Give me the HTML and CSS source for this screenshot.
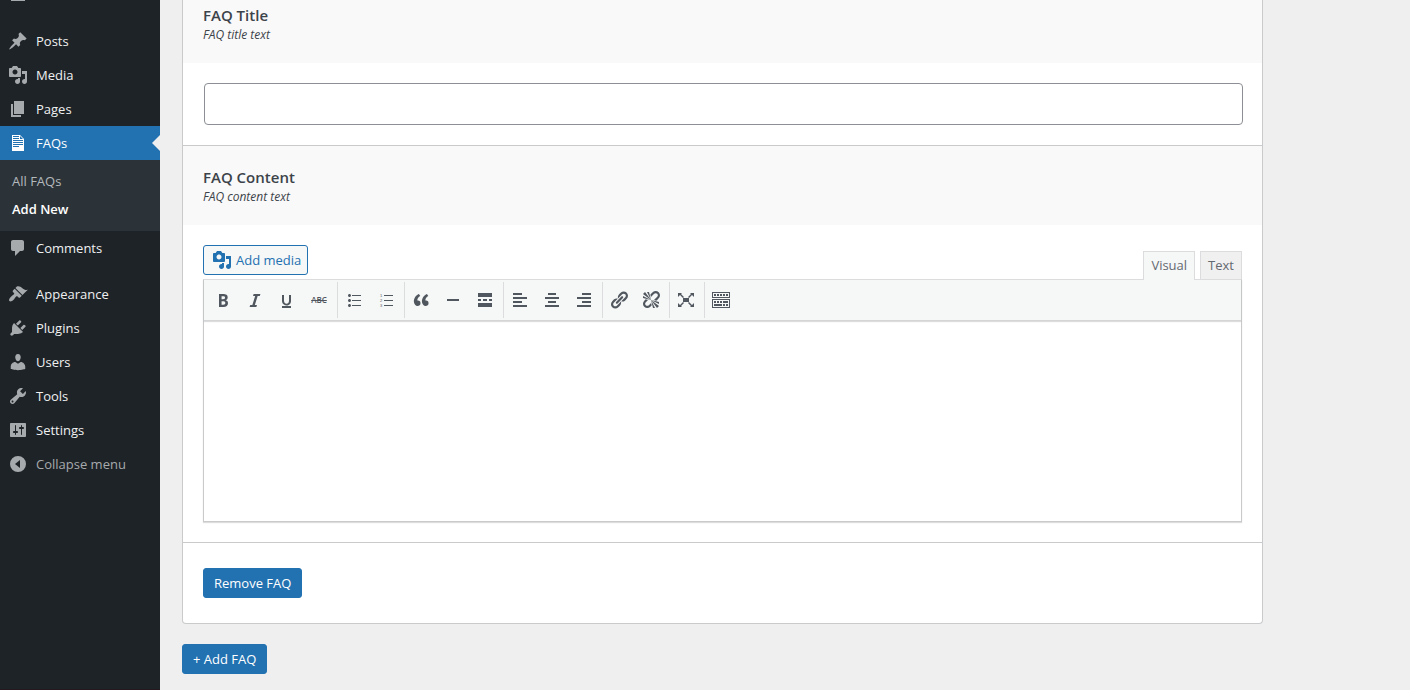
FILE: index.html
```html
<!DOCTYPE html>
<html lang="en">
<head>
<meta charset="utf-8">
<title>Add New FAQ</title>
<link rel="stylesheet" href="styles.css">
</head>
<body>
<div class="layout">
  <nav class="sidebar" aria-label="Main menu">
    <div class="scrolled-item"></div>
    <ul class="menu">
      <li><a class="menu-link" href="#"><svg class="icon" viewBox="0 0 20 20"><path d="M10.44 3.02l1.82-1.82 6.36 6.35-1.83 1.82c-1.05-.68-2.48-.57-3.41.36l-.75.75c-.92.93-1.04 2.35-.35 3.41l-1.83 1.82-2.41-2.41-2.8 2.79c-.42.42-3.38 2.71-3.8 2.29s1.86-3.39 2.28-3.81l2.79-2.79L4.1 9.36l1.83-1.82c1.05.69 2.48.57 3.4-.36l.75-.75c.93-.92 1.05-2.35.36-3.41z"/></svg>Posts</a></li>
      <li><a class="menu-link" href="#"><svg class="icon" viewBox="0 0 20 20"><path d="M13 11V4c0-.55-.45-1-1-1h-1.67L9 1H5L3.67 3H2c-.55 0-1 .45-1 1v7c0 .55.45 1 1 1h10c.55 0 1-.45 1-1zM7 4.500c1.380 0 2.500 1.120 2.500 2.500S8.380 9.500 7 9.500 4.500 8.380 4.500 7 5.620 4.500 7 4.500zM14 6h5v10.500c0 1.380-1.120 2.500-2.500 2.500S14 17.880 14 16.500s1.120-2.500 2.500-2.500c.17 0 .34.02.5.05V9h-3V6zm-4 8.050V13h2v3.500c0 1.380-1.120 2.500-2.500 2.500S7 17.880 7 16.500 8.120 14 9.500 14c.17 0 .34.02.5.05z"/></svg>Media</a></li>
      <li><a class="menu-link" href="#"><svg class="icon" viewBox="0 0 20 20"><path d="M6 15V2h10v13H6zm-1 1h8v2H3V5h2v11z"/></svg>Pages</a></li>
      <li>
        <a class="menu-link current" href="#"><svg class="icon" viewBox="0 0 20 20"><path d="M12 2l4 4v12H4V2h8zM5 3v1h6V3H5zm7 3h3l-3-3v3zM5 5v1h6V5H5zm10 3V7H5v1h10zm0 2V9H5v1h10zm0 2v-1H5v1h10zm-4 2v-1H5v1h6z"/></svg>FAQs</a>
        <ul class="submenu">
          <li><a class="submenu-link" href="#">All FAQs</a></li>
          <li><a class="submenu-link active" href="#">Add New</a></li>
        </ul>
      </li>
      <li><a class="menu-link" href="#"><svg class="icon" viewBox="0 0 20 20"><path d="M5 2h9c1.1 0 2 .9 2 2v7c0 1.100-.9 2-2 2h-2l-5 5v-5H5c-1.100 0-2-.9-2-2V4c0-1.100.9-2 2-2z"/></svg>Comments</a></li>
      <li class="separated"><a class="menu-link" href="#"><svg class="icon" viewBox="0 0 20 20"><path d="M14.48 11.06L7.41 3.99l1.500-1.500c.5-.56 2.300-.47 3.510.32 1.210.8 1.430 1.280 2.910 2.100 1.180.64 2.450 1.260 4.450.85zm-.71.71L6.700 4.700 4.930 6.470c-.39.39-.39 1.020 0 1.410l1.060 1.060c.39.39.39 1.030 0 1.420-.6.6-1.430 1.110-2.210 1.690-.35.26-.7.53-1.010.84C1.430 14.230.4 16.080 1.400 17.070c.99 1 2.840-.03 4.180-1.360.31-.31.58-.66.85-1.020.57-.78 1.080-1.610 1.690-2.210.39-.39 1.020-.39 1.410 0l1.060 1.060c.39.39 1.020.39 1.410 0z"/></svg>Appearance</a></li>
      <li><a class="menu-link" href="#"><svg class="icon" viewBox="0 0 20 20"><path d="M13.11 4.36L9.87 7.600 8 5.730l3.240-3.240c.35-.34 1.050-.2 1.560.32.52.51.66 1.210.31 1.550zm-8 1.770l.91-1.120 9.010 9.010-1.190.84c-.71.71-2.630 1.160-3.820 1.160H6.140L4.900 17.260c-.59.59-1.540.59-2.120 0-.59-.58-.59-1.530 0-2.120l1.240-1.240v-3.880c0-1.130.4-3.190 1.090-3.890zm7.260 3.970l3.240-3.240c.34-.35 1.040-.21 1.550.31.52.51.66 1.210.31 1.550l-3.240 3.250z"/></svg>Plugins</a></li>
      <li><a class="menu-link" href="#"><svg class="icon" viewBox="0 0 20 20"><path d="M10 9.250c-2.270 0-2.730-3.440-2.730-3.440C7 4.020 7.820 2 9.970 2c2.160 0 2.980 2.020 2.710 3.810 0 0-.41 3.440-2.680 3.440zm0 2.570L12.720 10c2.390 0 4.520 2.330 4.520 4.530v2.490s-3.650 1.130-7.240 1.130c-3.650 0-7.240-1.130-7.240-1.130v-2.490c0-2.250 1.940-4.480 4.470-4.480z"/></svg>Users</a></li>
      <li><a class="menu-link" href="#"><svg class="icon" viewBox="0 0 20 20"><path d="M16.68 9.77c-1.340 1.340-3.300 1.670-4.950.99l-5.410 6.520c-.99.99-2.590.99-3.580 0s-.99-2.590 0-3.570l6.520-5.420c-.68-1.650-.35-3.610.99-4.950 1.280-1.280 3.120-1.620 4.720-1.060l-2.890 2.890 2.820 2.820 2.860-2.870c.53 1.580.18 3.390-1.080 4.650zM3.810 16.210c.4.39 1.040.39 1.430 0 .4-.4.4-1.040 0-1.430-.39-.4-1.030-.4-1.430 0-.39.39-.39 1.030 0 1.430z"/></svg>Tools</a></li>
      <li><a class="menu-link" href="#"><svg class="icon" viewBox="0 0 20 20"><path d="M18 16V4c0-.55-.45-1-1-1H3c-.55 0-1 .45-1 1v12c0 .55.45 1 1 1h14c.55 0 1-.45 1-1zM8 11h1c.55 0 1 .45 1 1s-.45 1-1 1H8v1.500c0 .28-.22.5-.5.5s-.5-.22-.5-.5V13H6c-.55 0-1-.45-1-1s.45-1 1-1h1V5.500c0-.28.22-.5.5-.5s.5.22.5.5V11zm5-2h-1c-.55 0-1-.45-1-1s.45-1 1-1h1V5.500c0-.28.22-.5.5-.5s.5.22.5.5V7h1c.55 0 1 .45 1 1s-.45 1-1 1h-1v5.500c0 .28-.22.5-.5.5s-.5-.22-.5-.5V9z"/></svg>Settings</a></li>
      <li><button class="menu-link collapse" type="button"><svg class="icon" viewBox="0 0 20 20"><path fill-rule="evenodd" d="M10 2a8 8 0 1 0 0 16 8 8 0 0 0 0-16zM12 6v8l-5-4z"/></svg>Collapse menu</button></li>
    </ul>
  </nav>

  <main class="content">
    <section class="panel">
      <header class="field-head first">
        <label class="field-title" for="faq-title">FAQ Title</label>
        <p class="field-note">FAQ title text</p>
      </header>
      <div class="title-body">
        <input class="title-input" id="faq-title" type="text">
      </div>
      <header class="field-head ruled">
        <label class="field-title" for="faq-content">FAQ Content</label>
        <p class="field-note">FAQ content text</p>
      </header>
      <div class="editor-field">
        <div class="editor-tools">
          <button class="media-button" type="button"><svg class="icon media-icon" viewBox="0 0 20 20"><path d="M13 11V4c0-.55-.45-1-1-1h-1.670L9 1H5L3.670 3H2c-.55 0-1 .45-1 1v7c0 .55.45 1 1 1h10c.55 0 1-.45 1-1zM7 4.500c1.380 0 2.500 1.120 2.500 2.500S8.380 9.500 7 9.500 4.500 8.380 4.500 7 5.620 4.500 7 4.500zM14 6h5v10.500c0 1.380-1.120 2.500-2.500 2.500S14 17.880 14 16.500s1.120-2.500 2.500-2.500c.17 0 .34.02.5.05V9h-3V6zm-4 8.050V13h2v3.500c0 1.380-1.120 2.500-2.500 2.500S7 17.880 7 16.500 8.120 14 9.500 14c.17 0 .34.02.5.05z"/></svg>Add media</button>
          <div class="tabs">
            <button class="tab selected" type="button">Visual</button>
            <button class="tab" type="button">Text</button>
          </div>
        </div>
        <div class="editor">
          <div class="toolbar">
            <div class="tool-group">
              <button class="tool" type="button" aria-label="Bold"><svg class="icon" viewBox="0 0 20 20"><path d="M6 4v13h4.540c1.370 0 2.460-.33 3.260-1 .8-.66 1.200-1.580 1.200-2.770 0-.84-.17-1.510-.51-2.010s-.9-.85-1.670-1.030v-.09c.57-.1 1.020-.4 1.360-.9s.51-1.130.51-1.910c0-1.140-.39-1.980-1.170-2.500C12.750 4.260 11.500 4 9.780 4H6zm2.570 5.150V6.260h1.360c.73 0 1.270.11 1.610.32.34.22.51.58.51 1.070 0 .54-.16.92-.47 1.150s-.82.35-1.510.35h-1.500zm0 2.190h1.600c1.440 0 2.160.53 2.160 1.610 0 .6-.17 1.050-.51 1.340s-.86.43-1.570.43H8.570v-3.380z"/></svg></button>
              <button class="tool" type="button" aria-label="Italic"><svg class="icon" viewBox="0 0 20 20"><path d="M14.780 6h-2.130l-2.800 9h2.120l-.62 2H4.600l.62-2h2.140l2.800-9H8.030l.62-2h6.750z"/></svg></button>
              <button class="tool" type="button" aria-label="Underline"><svg class="icon" viewBox="0 0 20 20"><path d="M14 5h-2v5.710c0 1.990-1.120 2.980-2.450 2.980-1.320 0-2.550-1-2.550-2.960V5H5v5.870c0 1.910 1 4.540 4.480 4.540 3.490 0 4.520-2.580 4.520-4.500V5zm0 13v-2H5v2h9z"/></svg></button>
              <button class="tool strike" type="button" aria-label="Strikethrough">ABC</button>
            </div>
            <div class="tool-group">
              <button class="tool" type="button" aria-label="Bulleted list"><svg class="icon" viewBox="0 0 20 20"><path d="M5.500 7C4.670 7 4 6.330 4 5.500 4 4.680 4.670 4 5.500 4 6.320 4 7 4.680 7 5.500 7 6.330 6.320 7 5.500 7zM8 5h9v1H8V5zm-2.500 7c-.83 0-1.500-.67-1.500-1.500C4 9.680 4.670 9 5.500 9c.82 0 1.500.68 1.500 1.500 0 .83-.68 1.500-1.500 1.500zM8 10h9v1H8v-1zm-2.500 7c-.83 0-1.500-.67-1.500-1.500 0-.82.67-1.500 1.500-1.500.82 0 1.500.68 1.500 1.500 0 .83-.68 1.500-1.500 1.500zM8 15h9v1H8v-1z"/></svg></button>
              <button class="tool" type="button" aria-label="Numbered list"><svg class="icon list-digits" viewBox="0 0 20 20"><path d="M8 5h9v1H8zM8 10h9v1H8zM8 15h9v1H8z"/><text x="4" y="7">1</text><text x="4" y="12">2</text><text x="4" y="17">3</text></svg></button>
            </div>
            <div class="tool-group">
              <button class="tool" type="button" aria-label="Blockquote"><svg class="icon" viewBox="0 0 20 20"><path d="M9.490 13.220c0-.74-.2-1.380-.61-1.900-.62-.78-1.830-.88-2.530-.72-.29-1.650 1.110-3.750 2.920-4.650L7.880 4c-2.730 1.300-5.420 4.280-4.960 8.050C3.210 14.430 4.590 16 6.540 16c.85 0 1.560-.25 2.120-.75s.83-1.180.83-2.030zm8.050 0c0-.74-.2-1.380-.61-1.900-.63-.78-1.830-.88-2.530-.72-.29-1.650 1.110-3.750 2.920-4.650L15.930 4c-2.730 1.300-5.410 4.280-4.950 8.050.29 2.380 1.660 3.950 3.610 3.950.85 0 1.560-.25 2.120-.75s.83-1.180.83-2.030z"/></svg></button>
              <button class="tool" type="button" aria-label="Horizontal line"><svg class="icon" viewBox="0 0 20 20"><path d="M4 9h12v2H4z"/></svg></button>
              <button class="tool" type="button" aria-label="Read more"><svg class="icon" viewBox="0 0 20 20"><path d="M17 7V3H3v4h14zM6 11V9H3v2h3zm6 0V9H8v2h4zm5 0V9h-3v2h3zm0 6v-4H3v4h14z"/></svg></button>
            </div>
            <div class="tool-group">
              <button class="tool" type="button" aria-label="Align left"><svg class="icon" viewBox="0 0 20 20"><path d="M12 5V3H3v2h9zm5 4V7H3v2h14zm-5 4v-2H3v2h9zm5 4v-2H3v2h14z"/></svg></button>
              <button class="tool" type="button" aria-label="Align center"><svg class="icon" viewBox="0 0 20 20"><path d="M14 5V3H6v2h8zm3 4V7H3v2h14zm-3 4v-2H6v2h8zm3 4v-2H3v2h14z"/></svg></button>
              <button class="tool" type="button" aria-label="Align right"><svg class="icon" viewBox="0 0 20 20"><path d="M17 5V3H8v2h9zm0 4V7H3v2h14zm0 4v-2H8v2h9zm0 4v-2H3v2h14z"/></svg></button>
            </div>
            <div class="tool-group">
              <button class="tool" type="button" aria-label="Insert link"><svg class="icon" viewBox="0 0 20 20"><path d="M17.740 2.760c1.680 1.690 1.680 4.410 0 6.100l-1.530 1.520c-1.120 1.120-2.700 1.470-4.140 1.090l2.620-2.610.76-.77.76-.76c.84-.84.84-2.200 0-3.040-.84-.85-2.200-.85-3.040 0l-.77.76-3.380 3.380c-.37-1.440-.02-3.020 1.100-4.140l1.520-1.530c1.690-1.680 4.420-1.680 6.100 0zM8.590 13.430l5.340-5.340c.42-.42.42-1.100 0-1.520-.44-.43-1.130-.39-1.530 0l-5.330 5.340c-.42.42-.42 1.100 0 1.520.44.43 1.130.39 1.520 0zm-.76 2.290l4.140-4.150c.38 1.440.03 3.020-1.090 4.140l-1.520 1.530c-1.690 1.680-4.410 1.680-6.100 0-1.680-1.680-1.680-4.420 0-6.100l1.530-1.520c1.120-1.120 2.700-1.470 4.140-1.100l-4.140 4.150c-.85.84-.85 2.200 0 3.050.84.84 2.200.84 3.040 0z"/></svg></button>
              <button class="tool" type="button" aria-label="Remove link"><svg class="icon" viewBox="0 0 20 20"><path d="M17.740 2.260c1.680 1.690 1.680 4.410 0 6.100l-1.530 1.520c-.32.33-.69.58-1.080.77L13 10l1.690-1.640.76-.77.76-.76c.84-.84.84-2.200 0-3.040-.84-.85-2.200-.85-3.040 0l-.77.76-.76.76L10 7l-.65-2.140c.19-.38.44-.75.77-1.070l1.520-1.530c1.690-1.680 4.420-1.680 6.100 0zM2 4l8 6-6-8zm4-2l4 8-2-8H6zM2 6l8 4-8-2V6zm7.360 7.690L10 13l.74 2.350-1.380 1.390c-1.690 1.680-4.410 1.680-6.100 0-1.680-1.680-1.680-4.420 0-6.100l1.390-1.380L7 10l-.69.64-1.520 1.530c-.85.84-.85 2.200 0 3.040.84.85 2.200.85 3.040 0zM18 16l-8-6 6 8zm-4 2l-4-8 2 8h2zm4-4l-8-4 8 2v2z"/></svg></button>
            </div>
            <div class="tool-group">
              <button class="tool" type="button" aria-label="Fullscreen"><svg class="icon" viewBox="0 0 20 20"><path d="M7 8h6v4H7zM2 3h4L5 4l3 3-1 1-3-3-2 2zM18 3h-4l1 1-3 3 1 1 3-3 2 2zM2 17h4l-1-1 3-3-1-1-3 3-2-2zM18 17h-4l1-1-3-3 1-1 3 3 2-2z"/></svg></button>
            </div>
            <div class="tool-group">
              <button class="tool" type="button" aria-label="Toolbar toggle"><svg class="icon" viewBox="0 0 20 20"><path d="M19 2v6H1V2h18zm-1 5V3H2v4h16zM5 4v2H3V4h2zm3 0v2H6V4h2zm3 0v2H9V4h2zm3 0v2h-2V4h2zm3 0v2h-2V4h2zm2 5v9H1V9h18zm-1 8v-7H2v7h16zM5 11v2H3v-2h2zm3 0v2H6v-2h2zm3 0v2H9v-2h2zm6 0v2h-5v-2h5zm-6 3v2H3v-2h8zm3 0v2h-2v-2h2zm3 0v2h-2v-2h2z"/></svg></button>
            </div>
          </div>
          <textarea class="editor-area" id="faq-content"></textarea>
        </div>
      </div>
      <footer class="panel-foot">
        <button class="primary-button" type="button">Remove FAQ</button>
      </footer>
    </section>
    <button class="primary-button" type="button">+ Add FAQ</button>
  </main>
</div>
</body>
</html>
```

FILE: styles.css
```css
* {
  box-sizing: border-box;
}

body {
  margin: 0;
  background: #efefef;
  color: #3c434a;
  font-family: "Segoe UI", "Open Sans", "Noto Sans", sans-serif;
  font-size: 13px;
  line-height: 18px;
}

button,
input,
textarea {
  margin: 0;
  font: inherit;
}

button {
  cursor: pointer;
}

ul {
  margin: 0;
  padding: 0;
  list-style: none;
}

.icon {
  display: block;
  flex: none;
  width: 20px;
  height: 20px;
  fill: currentColor;
}

.layout {
  display: flex;
  min-height: 100vh;
}

/* Sidebar */

.sidebar {
  flex: none;
  width: 160px;
  background: #1d2327;
  border-bottom: 1px solid #24171d;
}

.scrolled-item {
  width: 14px;
  height: 1px;
  margin: 0 11px 23px;
  background: #a7aaad;
}

.menu-link {
  display: flex;
  align-items: center;
  gap: 8px;
  width: 100%;
  height: 34px;
  padding: 0 8px;
  border: 0;
  background: none;
  color: #f0f0f1;
  text-decoration: none;
}

.menu-link .icon {
  color: #a7aaad;
}

.menu-link.current {
  position: relative;
  background: #2271b1;
  color: #fff;
}

.menu-link.current .icon {
  color: #fff;
}

.menu-link.current::after {
  content: "";
  position: absolute;
  top: 9px;
  right: 0;
  border: 8px solid transparent;
  border-left-width: 0;
  border-right-color: #efefef;
}

.menu-link.collapse {
  color: #a7aaad;
}

.separated {
  margin-top: 12px;
}

.submenu {
  padding: 7px 0 8px;
  background: #2c3338;
}

.submenu-link {
  display: block;
  padding: 5px 12px;
  color: #b4b9be;
  text-decoration: none;
}

.submenu-link.active {
  color: #fff;
  font-weight: 600;
}

/* Content */

.content {
  flex: 1;
  min-width: 0;
  padding: 0 147px 16px 22px;
}

.panel {
  margin-bottom: 20px;
  background: #fff;
  border: 1px solid #c9cacc;
  border-top: 0;
  border-radius: 0 0 4px 4px;
}

.field-head {
  padding: 21px 20px 19px;
  background: #f9f9f9;
}

.field-head.first {
  padding-top: 5px;
}

.ruled {
  border-top: 1px solid #c9cacc;
}

.field-title {
  display: block;
  margin-bottom: 1px;
  font-size: 15px;
  font-weight: 600;
  line-height: 20px;
}

.field-note {
  margin: 0;
  font-size: 12px;
  font-style: italic;
}

.title-body {
  padding: 20px 19px 20px 21px;
}

.title-input {
  display: block;
  width: 100%;
  height: 42px;
  padding: 0 8px;
  border: 1px solid #8c8f94;
  border-radius: 4px;
  background: #fff;
}

.editor-field {
  padding: 20px;
}

.editor-tools {
  display: flex;
  justify-content: space-between;
  height: 34px;
}

.media-button {
  display: flex;
  align-items: center;
  gap: 4px;
  height: 30px;
  padding: 0 6px 0 8px;
  border: 1px solid #2271b1;
  border-radius: 3px;
  background: #f6f7f7;
  color: #2271b1;
}

.tabs {
  display: flex;
  align-items: flex-end;
  gap: 5px;
}

.tab {
  height: 28px;
  padding: 0 7px 2px;
  border: 1px solid #dcdcde;
  border-bottom: 0;
  background: #f0f0f1;
  color: #646970;
}

.tab.selected {
  z-index: 1;
  height: 29px;
  margin-bottom: -1px;
  background: #f6f7f7;
}

.editor {
  border: 1px solid #c9cacc;
  border-top-color: #dcdcde;
  box-shadow: 0 1px 1px #00000022;
}

.toolbar {
  display: flex;
  padding: 2px 3px;
  background: #f6f7f7;
  border-bottom: 1px solid #d4d5d7;
  box-shadow: 0 1px 1px #00000022;
}

.tool-group {
  display: flex;
  padding-right: 2px;
}

.tool-group + .tool-group {
  border-left: 1px solid #dcdcde;
}

.tool {
  display: grid;
  place-items: center;
  width: 32px;
  height: 36px;
  padding: 0;
  border: 0;
  background: none;
  color: #50575e;
}

.tool.strike {
  font-size: 8px;
  font-weight: 600;
  text-decoration: line-through;
}

.list-digits text {
  font-family: "Liberation Sans", sans-serif;
  font-size: 4px;
}

.editor-area {
  display: block;
  width: 100%;
  height: 200px;
  padding: 8px;
  border: 0;
  background: transparent;
  resize: none;
}

.panel-foot {
  padding: 25px 20px;
  border-top: 1px solid #c9cacc;
}

.primary-button {
  display: block;
  height: 30px;
  padding: 0 10px;
  border: 1px solid #2271b1;
  border-radius: 3px;
  background: #2271b1;
  color: #fff;
}
```
